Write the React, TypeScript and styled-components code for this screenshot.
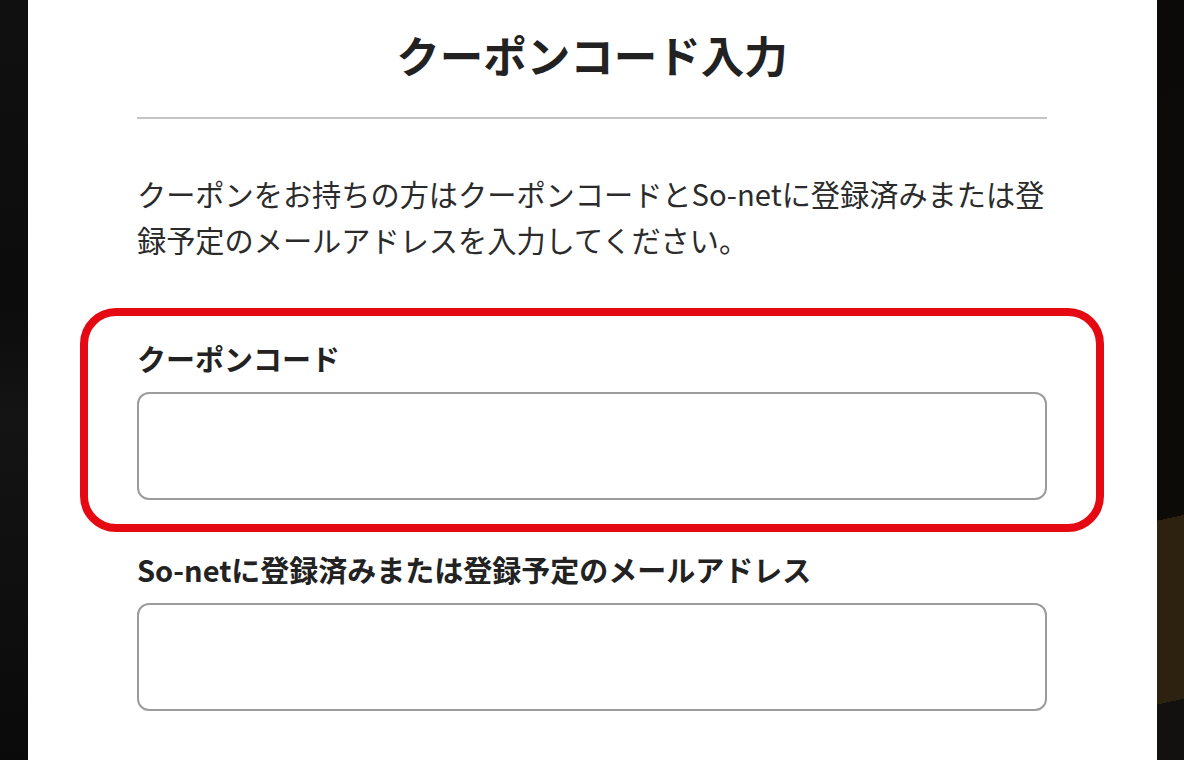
import styled, { createGlobalStyle } from 'styled-components';

const GlobalStyle = createGlobalStyle`
    html, body {
        margin: 0;
        padding: 0;
        height: 100%;
        background: #0c0b09;
    }
    #root {
        height: 100%;
    }
    * {
        box-sizing: border-box;
    }
`;

const Page = styled.div`
    display: flex;
    height: 100vh;
    overflow: hidden;
    font-family: "Noto Sans CJK JP", "Noto Sans", sans-serif;
`;

const Side = styled.div<{ $right?: boolean }>`
    flex: 0 0 ${p => (p.$right ? '27px' : '28px')};
    background: ${p =>
        p.$right
            ? 'linear-gradient(168deg, #0b0a08 0%, #0d0b08 68%, #2d2110 68%, #2d2110 92%, #121110 92%)'
            : 'linear-gradient(180deg, #101010 0%, #0c0c0c 40%, #141414 55%, #0a0a0a 100%)'};
`;

const Modal = styled.div`
    flex: 1;
    background: #ffffff;
    padding: 0 110px 0 109px;
    color: #222222;
`;

const Header = styled.div`
    padding: 33px 0 41px;
    border-bottom: 2px solid #c4c4c4;
`;

const Title = styled.h1`
    margin: 0;
    font-size: 43.5px;
    line-height: 43px;
    font-weight: 700;
    text-align: center;
    color: #222222;
`;

const Lead = styled.p`
    margin: 51px 0 0;
    font-size: 29.2px;
    line-height: 46px;
    color: #2b2b2b;
`;

const Highlight = styled.div`
    margin: 46px -57px 0;
    padding: 21px 49px 24px;
    border: 8px solid #e50914;
    border-radius: 36px;
`;

const Field = styled.div<{ $gap?: number }>`
    display: flex;
    flex-direction: column;
    margin-top: ${p => p.$gap ?? 0}px;
`;

const Label = styled.label`
    font-size: 29px;
    line-height: 42px;
    font-weight: 700;
    color: #222222;
`;

const Input = styled.input`
    margin-top: 13px;
    height: 108px;
    width: 100%;
    border: 2px solid #9c9c9c;
    border-radius: 12px;
    background: #ffffff;
    padding: 0 20px;
    font-size: 28px;
    font-family: inherit;
    outline: none;
`;

const App = () => {
    return (
        <>
            <GlobalStyle />
            <Page>
                <Side />
                <Modal>
                    <Header>
                        <Title>クーポンコード入力</Title>
                    </Header>
                    <Lead>
                        クーポンをお持ちの方はクーポンコードとSo-netに登録済みまたは登録予定のメールアドレスを入力してください。
                    </Lead>
                    <Highlight>
                        <Field>
                            <Label htmlFor="coupon">クーポンコード</Label>
                            <Input id="coupon" type="text" />
                        </Field>
                    </Highlight>
                    <Field $gap={16}>
                        <Label htmlFor="mail">So-netに登録済みまたは登録予定のメールアドレス</Label>
                        <Input id="mail" type="email" />
                    </Field>
                </Modal>
                <Side $right />
            </Page>
        </>
    );
};

export default App;
